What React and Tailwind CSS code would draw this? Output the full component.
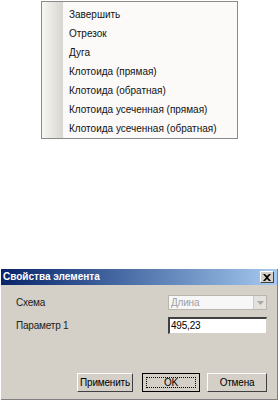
export default function App() {
  const items = [
    "Завершить",
    "Отрезок",
    "Дуга",
    "Клотоида (прямая)",
    "Клотоида (обратная)",
    "Клотоида усеченная (прямая)",
    "Клотоида усеченная (обратная)",
  ];
  const font = { fontFamily: '"Liberation Sans", Arial, sans-serif' };
  const raised =
    "bg-[#d4d0c8] border border-t-white border-l-white border-r-[#404040] border-b-[#404040]";
  return (
    <div className="w-[278px] h-[400px] bg-white overflow-hidden flex flex-col text-black" style={font}>
      <div className="ml-[41px] mt-[1px] w-[197px] h-[138px] border border-[#8a8a8a] bg-[#fbfaf8] flex text-[10px] text-[#111]">
        <div className="w-[21px] h-full bg-gradient-to-r from-[#f7f6f3] to-[#d8d6cf]" />
        <div className="flex flex-col pt-[3px]">
          {items.map((t) => (
            <div key={t} className="h-[19px] flex items-center pl-[6px] leading-none">
              {t}
            </div>
          ))}
        </div>
      </div>

      <div className="mt-[130px] w-[278px] flex-1 bg-[#d4d0c8] border-l border-l-[#ffffff] border-r border-r-[#808080] flex flex-col text-[10px] tracking-[-0.2px]">
        <div className="h-[16px] flex items-center justify-between bg-gradient-to-r from-[#0a246a] to-[#a6caf0] pl-[2px] pr-[3px]">
          <span className="text-white font-bold text-[10px] tracking-[0px] leading-none">Свойства элемента</span>
          <div className="w-[14px] h-[12px] bg-[#d4d0c8] border border-t-white border-l-white border-r-[#404040] border-b-[#404040] flex items-center justify-center">
            <svg width="8" height="7" viewBox="0 0 8 7">
              <path d="M0 0 L2 0 L4 2 L6 0 L8 0 L5 3.5 L8 7 L6 7 L4 5 L2 7 L0 7 L3 3.5 Z" fill="#000" />
            </svg>
          </div>
        </div>

        <div className="flex flex-col pl-[15px] pr-[10px] pt-[10px]">
          <div className="flex items-center justify-between h-[15px]">
            <span className="text-[#202020]">Схема</span>
            <div className="w-[99px] h-[15px] bg-[#f7f7f7] border border-[#b8b5ae] flex items-center">
              <span className="flex-1 pl-[2px] text-[#a0a0a0] leading-none">Длина</span>
              <div className="w-[13px] h-[13px] bg-[#e4e2dc] border-l border-[#cfccc5] flex items-center justify-center">
                <svg width="7" height="4" viewBox="0 0 7 4">
                  <path d="M0 0 L7 0 L3.5 4 Z" fill="#a8a8a8" />
                </svg>
              </div>
            </div>
          </div>
          <div className="flex items-center justify-between mt-[7px] h-[17px]">
            <span className="text-[#202020]">Параметр 1</span>
            <div className="w-[99px] h-[17px] bg-white border-t-2 border-l-2 border-t-[#404040] border-l-[#404040] border-b border-r border-b-[#d4d0c8] border-r-[#d4d0c8] flex items-center">
              <span className="pl-[1px] leading-none">495,23</span>
            </div>
          </div>
        </div>

        <div className="flex-1" />

        <div className="flex justify-end pr-[10px] mb-[7px]">
          <button className={`w-[56px] h-[19px] ${raised} flex items-center justify-center leading-none text-[10px]`}>
            Применить
          </button>
          <button className="ml-[9px] w-[58px] h-[19px] bg-[#d4d0c8] border border-black flex items-center justify-center p-[3px]">
            <span className="w-full h-full border border-dotted border-black flex items-center justify-center leading-none text-[10px]">OK</span>
          </button>
          <button className={`ml-[7px] w-[60px] h-[19px] ${raised} flex items-center justify-center leading-none text-[10px]`}>
            Отмена
          </button>
        </div>
        <div className="h-[1px] bg-[#808080]" />
      </div>
    </div>
  );
}
